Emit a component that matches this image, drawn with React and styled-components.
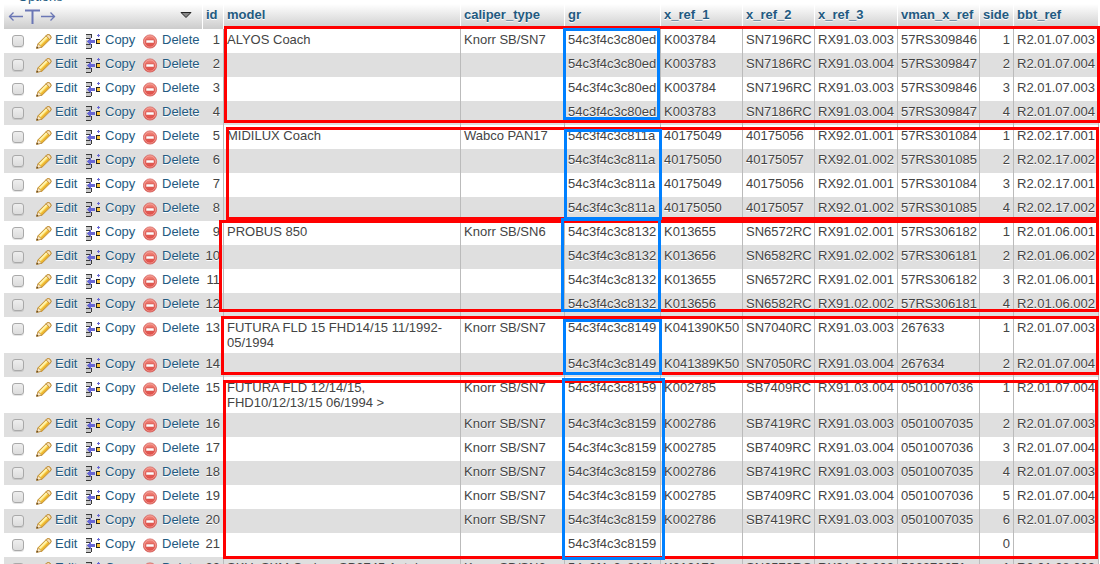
import React from 'react';
import styled, { createGlobalStyle } from 'styled-components'

const columns = [
  {key:'id',width:21,right:true},
  {key:'model'},
  {key:'caliper_type',width:104},
  {key:'gr',width:96},
  {key:'x_ref_1',width:82},
  {key:'x_ref_2',width:72},
  {key:'x_ref_3',width:83},
  {key:'vman_x_ref',width:82},
  {key:'side',width:34,right:true},
  {key:'bbt_ref',width:85},
]

const rows = [
  [1,'ALYOS Coach','Knorr SB/SN7','54c3f4c3c80ed','K003784','SN7196RC','RX91.03.003','57RS309846',1,'R2.01.07.003'],
  [2,'','','54c3f4c3c80ed','K003783','SN7186RC','RX91.03.004','57RS309847',2,'R2.01.07.004'],
  [3,'','','54c3f4c3c80ed','K003784','SN7196RC','RX91.03.003','57RS309846',3,'R2.01.07.003'],
  [4,'','','54c3f4c3c80ed','K003783','SN7186RC','RX91.03.004','57RS309847',4,'R2.01.07.004'],
  [5,'MIDILUX Coach','Wabco PAN17','54c3f4c3c811a','40175049','40175056','RX92.01.001','57RS301084',1,'R2.02.17.001'],
  [6,'','','54c3f4c3c811a','40175050','40175057','RX92.01.002','57RS301085',2,'R2.02.17.002'],
  [7,'','','54c3f4c3c811a','40175049','40175056','RX92.01.001','57RS301084',3,'R2.02.17.001'],
  [8,'','','54c3f4c3c811a','40175050','40175057','RX92.01.002','57RS301085',4,'R2.02.17.002'],
  [9,'PROBUS 850','Knorr SB/SN6','54c3f4c3c8132','K013655','SN6572RC','RX91.02.001','57RS306182',1,'R2.01.06.001'],
  [10,'','','54c3f4c3c8132','K013656','SN6582RC','RX91.02.002','57RS306181',2,'R2.01.06.002'],
  [11,'','','54c3f4c3c8132','K013655','SN6572RC','RX91.02.001','57RS306182',3,'R2.01.06.001'],
  [12,'','','54c3f4c3c8132','K013656','SN6582RC','RX91.02.002','57RS306181',4,'R2.01.06.002'],
  [13,'FUTURA FLD 15 FHD14/15 11/1992-05/1994','Knorr SB/SN7','54c3f4c3c8149','K041390K50','SN7040RC','RX91.03.003','267633',1,'R2.01.07.003'],
  [14,'','','54c3f4c3c8149','K041389K50','SN7050RC','RX91.03.004','267634',2,'R2.01.07.004'],
  [15,'FUTURA FLD 12/14/15, FHD10/12/13/15 06/1994 >','Knorr SB/SN7','54c3f4c3c8159','K002785','SB7409RC','RX91.03.004','0501007036',1,'R2.01.07.004'],
  [16,'','Knorr SB/SN7','54c3f4c3c8159','K002786','SB7419RC','RX91.03.003','0501007035',2,'R2.01.07.003'],
  [17,'','Knorr SB/SN7','54c3f4c3c8159','K002785','SB7409RC','RX91.03.004','0501007036',3,'R2.01.07.004'],
  [18,'','Knorr SB/SN7','54c3f4c3c8159','K002786','SB7419RC','RX91.03.003','0501007035',4,'R2.01.07.003'],
  [19,'','Knorr SB/SN7','54c3f4c3c8159','K002785','SB7409RC','RX91.03.004','0501007036',5,'R2.01.07.004'],
  [20,'','Knorr SB/SN7','54c3f4c3c8159','K002786','SB7419RC','RX91.03.003','0501007035',6,'R2.01.07.003'],
  [21,'','','54c3f4c3c8159','','','','',0,''],
  [22,'SKU, SKM Carbon SB2745 Autobus','Knorr SB/SN6','54c3f4c3c819b','K013173','SN6570RC','RX91.03.003','506270071',1,'R2.01.08.003'],
]

// marks drawn over the table, measured from its corners
const groupMarks = [
  {top:22,left:220,right:-1,height:97},
  {top:123,left:222,right:0,height:93},
  {top:216,left:215,right:0,height:92},
  {top:312,left:217,right:0,height:59},
  {top:376,left:219,right:1,height:179},
]
const keyMarks = [
  {top:24,right:439,width:97,height:92},
  {top:125,right:437,width:98,height:91},
  {top:214,right:438,width:100,height:94},
  {top:315,right:437,width:99,height:56},
  {top:374,right:434,width:103,height:182},
]

const Pencil = () => <Icon viewBox="0 0 16 16">
  <path d="M.6 14.2 L2.2 9.6 L10.6 1.2 Q12.4 -.2 14.2 1.4 Q15.8 3.2 14.4 5 L6 13.2 Z" fill="#f9d54e" stroke="#b5802a" strokeWidth=".9" />
  <path d="M3.6 10.3 L11.2 2.7" stroke="#fff3b0" strokeWidth="1.7" />
  <path d="M5.4 12.1 L13.2 4.5" stroke="#e8ab2c" strokeWidth="1.2" />
  <path d="M10 1.8 L10.6 1.2 Q12.4 -.2 14.2 1.4 Q15.8 3.2 14.4 5 L13.8 5.6 Z" fill="#f8e0b4" stroke="#b5802a" strokeWidth=".8" />
  <path d="M.6 14.2 L2.2 9.8 L5.8 13.2 Z" fill="#f8e8cb" stroke="#b5802a" strokeWidth=".6" />
  <path d="M.4 14.5 L1 12.6 L2.4 14 Z" fill="#4a3618" />
</Icon>

const CopyRow = () => <Icon viewBox="0 0 16 16" shapeRendering="crispEdges">
  <path d="M0 1 H5 V4 H0 Z M0 6 H3 V10 H0 Z M0 11 H5 V14 H0 Z" fill="#c8c8c8" />
  <path d="M0 0 H6 V4 H5 V1 H0 Z M0 4 H4 V5 H0 Z M0 10 H6 V14 H5 V11 H0 Z M0 14 H5 V15 H0 Z" fill="#3a3a3a" />
  <path d="M1 7 H2 V6 H3 V5 H4 V4 H5 V6 H9 V9 H5 V11 H4 V10 H3 V9 H2 V8 H1 Z" fill="#6666d4" />
  <path d="M12 0 H13 V1 H14 V2 H13 V3 H12 V2 H11 V1 H12 Z" fill="#6666d4" />
  <path d="M10 5 H14 V6 H11 V9 H14 V10 H10 Z" fill="#222" />
  <rect x="11" y="6" width="3" height="3" fill="#f8c136" />
</Icon>

const DeleteSign = () => <Icon viewBox="0 0 16 16">
  <defs>
    <linearGradient id="sign" x1="0" y1="0" x2="0" y2="1">
      <stop offset="0" stopColor="#f2897e" />
      <stop offset="1" stopColor="#dc4540" />
    </linearGradient>
  </defs>
  <circle cx="7" cy="7.5" r="6.6" fill="url(#sign)" stroke="#d0605a" strokeWidth=".8" />
  <circle cx="7" cy="7.5" r="5.6" fill="none" stroke="#f7aca3" strokeWidth=".7" />
  <rect x="3" y="6" width="8" height="3" rx=".6" fill="#fff" stroke="#c9453e" strokeWidth=".5" />
</Icon>

const Row = ({row}) => <tr>
  <Cell><Tick type="checkbox" aria-label={`Row ${row[0]}`} /></Cell>
  <Cell><Action href="#edit"><Pencil />Edit</Action></Cell>
  <Cell><Action href="#copy"><CopyRow />Copy</Action></Cell>
  <Cell><Action href="#delete"><DeleteSign />Delete</Action></Cell>
  {columns.map((c,i)=>
    <Cell key={c.key} $line $right={c.right}>{row[i]}</Cell>
  )}
</tr>

function App() {
  return (<Page>
    <Global />
    <Options href="#options">Options</Options>
    <Results>
      <Table>
        <colgroup>
          <Col $width={29} />
          <Col $width={50} />
          <Col $width={57} />
          <Col $width={63} />
          {columns.map(c=><Col key={c.key} $width={c.width} />)}
        </colgroup>
        <thead>
          <tr>
            <Head colSpan={4}>
              <Tools>
                <svg width="48" height="18" viewBox="0 0 48 18" fill="none" stroke="#6b77b5">
                  <path d="M1 9.5 H15 M5.5 5.5 L1.5 9.5 L5.5 13.5 M33 9.5 H47 M42.5 5.5 L46.5 9.5 L42.5 13.5" strokeWidth="1.3" />
                  <path d="M17 3.5 H32 M24.5 3 V17" strokeWidth="2" />
                </svg>
                <svg width="12" height="18" viewBox="0 0 12 18">
                  <path d="M1 5.5 H11 L6 10.5 Z" fill="#888" stroke="#222" />
                </svg>
              </Tools>
            </Head>
            {columns.map(c=><Head key={c.key}><Sort href={'#'+c.key}>{c.key}</Sort></Head>)}
          </tr>
        </thead>
        <tbody>
          {rows.map(r=><Row key={r[0]} row={r} />)}
        </tbody>
      </Table>
      {groupMarks.map(m=><Mark key={m.top} $color="#ff0000" $box={m} />)}
      {keyMarks.map(m=><Mark key={m.top} $color="#0080ff" $box={m} />)}
    </Results>
  </Page>)
}

export default App

const Global = createGlobalStyle`
  body{
    margin:0;
    background:#fff;
    color:#444;
    font-family:"Liberation Sans", Arial, sans-serif;
    font-size:13px;
    line-height:15px;
  }
  a{
    color:#235a81;
    text-decoration:none;
  }
`
const Page = styled.div`
  height:100vh;
  overflow:hidden;
  display:flex;
  flex-direction:column;
  align-items:stretch;
`
const Options = styled.a`
  margin:-11px 0 0 18px;
  flex:none;
`
const Results = styled.div`
  position:relative;
  flex:none;
  margin:0 1px 0 4px;
`
const Table = styled.table`
  width:100%;
  table-layout:fixed;
  border-collapse:separate;
  border-spacing:0;
  tbody tr:nth-child(even){
    background:#dfdfdf;
  }
`
const Col = styled.col`
  width:${p=>p.$width ? p.$width+'px' : 'auto'};
`
const Head = styled.th`
  height:25px;
  box-sizing:border-box;
  padding:3px 0 3px 3px;
  border-right:1px solid #fff;
  background:linear-gradient(#fff, #ccc);
  text-align:left;
  vertical-align:top;
  white-space:nowrap;
  text-shadow:0 1px 0 #fff;
`
const Sort = styled.a`
  display:block;
`
const Tools = styled.div`
  display:flex;
  justify-content:space-between;
  padding:0 10px 0 1px;
`
const Cell = styled.td`
  padding:3px ${p=>p.$line ? '3px' : 0} 3px 3px;
  border-right:${p=>p.$line ? '1px solid #bbb' : 0};
  text-align:${p=>p.$right ? 'right' : 'left'};
  vertical-align:top;
  text-shadow:0 1px 0 #fff;
  &:nth-child(5){
    padding-left:0;
  }
`
const Tick = styled.input`
  appearance:none;
  display:block;
  box-sizing:border-box;
  width:12px;
  height:12px;
  margin:3px 0 0 5px;
  border:1px solid #a9a9a9;
  border-radius:3px;
  background:linear-gradient(#eee, #dcdcdc);
  box-shadow:0 1px 0 rgba(0,0,0,0.1);
`
const Action = styled.a`
  display:flex;
  align-items:flex-start;
  gap:3px;
`
const Icon = styled.svg`
  width:16px;
  height:16px;
  margin-top:2px;
  flex:none;
  fill:none;
`
const Mark = styled.div`
  position:absolute;
  box-sizing:border-box;
  pointer-events:none;
  border:3px solid ${p=>p.$color};
  top:${p=>p.$box.top}px;
  right:${p=>p.$box.right}px;
  height:${p=>p.$box.height}px;
  ${p=>p.$box.width ? `width:${p.$box.width}px;` : `left:${p.$box.left}px;`}
`
